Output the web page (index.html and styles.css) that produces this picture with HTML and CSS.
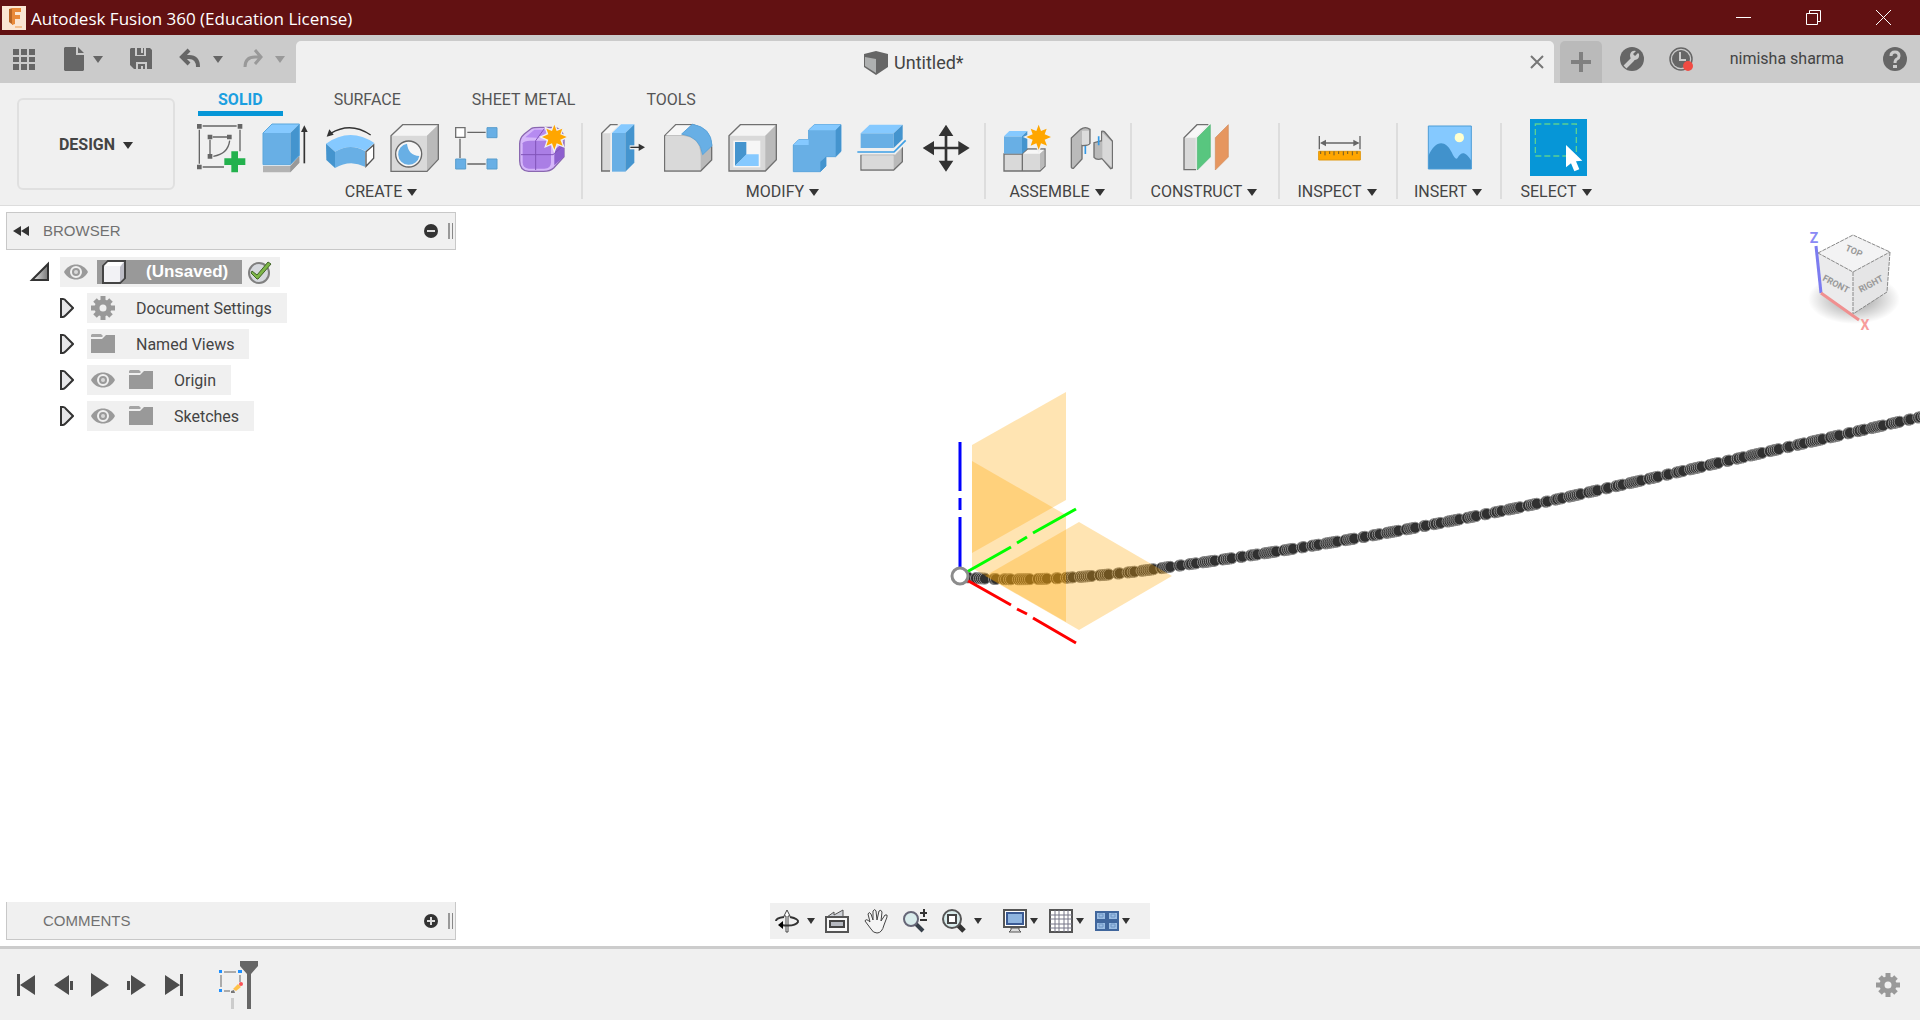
FILE: index.html
```html
<!DOCTYPE html>
<html lang="en">
<head>
    <meta charset="UTF-8">
    <meta name="viewport" content="width=device-width, initial-scale=1.0">
    <title>Autodesk Fusion 360 (Education License)</title>
    <link rel="stylesheet" href="styles.css">
</head>
<body>
    <!-- shared icons -->
    <svg class="defs" aria-hidden="true">
        <symbol id="eye" viewBox="0 0 24 24">
            <path d="M0 12C5 2 19 2 24 12C19 22 5 22 0 12Z" fill="#9a9a9a"/>
            <circle cx="12" cy="12" r="5" fill="#9a9a9a" stroke="#f0f0f0" stroke-width="2"/>
            <circle cx="12" cy="12" r="2" fill="#d8d8d8"/>
        </symbol>
        <symbol id="folder" viewBox="0 0 24 24">
            <path d="M0 4V3L1 2H10L12 4L11 5H0Z" fill="#a5a5a5"/>
            <path d="M0 7H11L15 3H24V21H0Z" fill="#999"/>
        </symbol>
        <symbol id="gear" viewBox="0 0 24 24">
            <g stroke="#999" stroke-width="5">
                <path d="M12 0V24M0 12H24M4 4L20 20M20 4L4 20"/>
            </g>
            <circle cx="12" cy="12" r="6" fill="#f0f0f0" stroke="#999" stroke-width="5"/>
        </symbol>
        <symbol id="closed" viewBox="0 0 14 20">
            <path d="M1 1H3Q5 1 6 3L13 10L6 17Q4 19 3 19H1Z" fill="#e6e6e8" stroke="#333" stroke-width="2"/>
        </symbol>
    </svg>

    <header class="titlebar">
        <svg class="logo" viewBox="0 0 24 24">
            <rect width="24" height="24" fill="#fbe6d3"/>
            <path d="M7 3L11 2V19L7 16Z" fill="#b96524"/>
            <path d="M10 2H19V6H13V9H18V13H13V18L10 19Z" fill="#e98a3a"/>
            <path d="M13 20H20V22H13Z" fill="#f5c08f"/>
        </svg>
        <h1>Autodesk Fusion 360 (Education License)</h1>
        <div class="window-buttons">
            <button aria-label="Minimize"><svg viewBox="0 0 15 15"><path d="M0 7.500H15"/></svg></button>
            <button aria-label="Restore"><svg viewBox="0 0 15 15"><path d="M.5 3.500H11.500V14.500H.5ZM3.500 3V.5H14.500V11.500H12"/></svg></button>
            <button aria-label="Close"><svg viewBox="0 0 15 15"><path d="M0 0L15 15M15 0L0 15"/></svg></button>
        </div>
    </header>

    <div class="topbar">
        <div class="quick">
            <button aria-label="Data panel">
                <svg viewBox="0 0 24 24"><path d="M1 2H7V8H1ZM9 2H15V8H9ZM17 2H23V8H17ZM1 10H7V15H1ZM9 10H15V15H9ZM17 10H23V15H17ZM1 17H7V23H1ZM9 17H15V23H9ZM17 17H23V23H17Z"/></svg>
            </button>
            <button aria-label="File">
                <svg viewBox="0 0 24 24"><path d="M3 0H14V8H22V23L21 24H3L2 23V1ZM16 0L22 6H16Z"/></svg>
                <span class="caret"></span>
            </button>
            <button aria-label="Save">
                <svg viewBox="0 0 24 24"><path d="M2 1H6V9H17V1H21L23 3V22H18V15H7V22L5 22L1 18V2ZM8 1H12V6H14V1H15V8H8ZM9 17H16V22H14V19H12V22H9Z"/></svg>
            </button>
            <div class="history">
                <button aria-label="Undo">
                    <svg viewBox="0 0 24 24"><path d="M10 3L3 10L10 17M3 10H10Q19 10 19 20" fill="none" stroke="#666" stroke-width="4"/></svg>
                    <span class="caret"></span>
                </button>
                <button class="dim" aria-label="Redo">
                    <svg viewBox="0 0 24 24"><path d="M14 3L20 10L14 17M20 10H14Q4 10 4 20" fill="none" stroke="#999" stroke-width="3"/></svg>
                    <span class="caret"></span>
                </button>
            </div>
        </div>
        <div class="doc-tab">
            <div class="doc-title">
                <svg viewBox="0 0 24 24"><path d="M0 3L12 0L24 3V16L12 24L0 16Z" fill="#666"/><path d="M1 6L12 8V22L1 15Z" fill="#aeb0b0"/></svg>
                <span>Untitled*</span>
            </div>
            <button aria-label="Close tab"><svg viewBox="0 0 14 14"><path d="M1 1L13 13M13 1L1 13" stroke="#777" stroke-width="2"/></svg></button>
        </div>
        <button class="new-tab" aria-label="New tab"><svg viewBox="0 0 20 20"><path d="M10 0V20M0 10H20" stroke="#808080" stroke-width="4"/></svg></button>
        <div class="account">
            <button aria-label="Extensions">
                <svg viewBox="0 0 24 24"><circle cx="12" cy="12" r="12" fill="#666"/><path d="M5 20L13 12" stroke="#ccc" stroke-width="4"/><path d="M18 6L15 9L13 7L16 4Q11 3 10 8Q10 14 15 13Q20 12 19 7Z" fill="#ccc"/></svg>
            </button>
            <button aria-label="Job status">
                <svg viewBox="0 0 24 24"><circle cx="12" cy="12" r="11" fill="none" stroke="#666" stroke-width="1.500"/><circle cx="12" cy="12" r="9" fill="#666"/><path d="M11 5V13H17" fill="none" stroke="#ccc" stroke-width="2"/><circle cx="19" cy="19" r="5" fill="#f04b43"/></svg>
            </button>
            <button class="user">nimisha sharma</button>
            <button aria-label="Help">
                <svg viewBox="0 0 24 24"><circle cx="12" cy="12" r="12" fill="#666"/><path d="M8 9Q8 5 12 5Q16 5 16 9Q16 11 14 12Q12 13 12 16" fill="none" stroke="#ccc" stroke-width="3"/><path d="M10 18H14V21H10Z" fill="#ccc"/></svg>
            </button>
        </div>
    </div>

    <section class="ribbon">
        <button class="workspace">DESIGN <span class="caret"></span></button>
        <div class="tools">
            <nav class="tabs">
                <a href="#" class="active">SOLID</a>
                <a href="#">SURFACE</a>
                <a href="#">SHEET METAL</a>
                <a href="#">TOOLS</a>
            </nav>
            <div class="groups">
                <div class="group create">
                    <div class="icons">
                        <button aria-label="Create Sketch">
                            <svg viewBox="49 130 144 144">
                                <g fill="none" stroke="#666" stroke-width="4"><path d="M66 136H168M56 147V249M178 147V212M66 259H130M96 169H140M88 177V220M98 227Q142 220 147 180"/></g>
                                <path d="M49 130H63V144H49ZM171 130H185V144H171ZM49 252H63V266H49ZM81 162H95V176H81ZM139 162H153V176H139ZM81 220H95V234H81Z" fill="#666"/>
                                <path d="M152 212H172V233H194V253H172V275H152V253H131V233H152Z" fill="#23b14d"/>
                            </svg>
                        </button>
                        <button aria-label="Extrude">
                            <svg viewBox="244 130 144 144">
                                <path d="M247 256H329L356 226V246L329 275H247Z" fill="#b3b3b3"/><path d="M329 256L356 226V246L329 275Z" fill="#999"/>
                                <path d="M247 157H329V252H247Z" fill="#68afe5"/><path d="M247 157L274 130H356L329 157Z" fill="#85c9ff"/><path d="M329 157L356 130V224L329 252Z" fill="#4494ce"/>
                                <path d="M247 157L274 130H356V224L329 252H247Z" fill="none" stroke="#5ba7dc" stroke-width="3"/>
                                <path d="M371 248V146" stroke="#333" stroke-width="5"/><path d="M361 154L371 134L381 154Z" fill="#333"/>
                            </svg>
                        </button>
                        <button aria-label="Revolve">
                            <svg viewBox="439 130 144 144">
                                <path d="M436 189Q508 138 581 187L555 211Q508 186 463 213Z" fill="#85c9ff"/>
                                <path d="M436 189L463 213V262L437 238Z" fill="#4494ce"/>
                                <path d="M463 213Q508 186 553 211V258Q508 235 463 262Z" fill="#68afe5"/>
                                <path d="M556 213L579 193V233L556 257Z" fill="#fff" stroke="#555" stroke-width="4"/>
                                <path d="M450 158Q510 122 570 163" fill="none" stroke="#333" stroke-width="4"/><path d="M438 168L446 146L459 162Z" fill="#333"/>
                            </svg>
                        </button>
                        <button aria-label="Hole">
                            <svg viewBox="634 130 144 144">
                                <path d="M631 165L666 132H773V236L739 272H631Z" fill="#d9d9d9"/><path d="M631 165L666 132H773L739 165Z" fill="#f4f4f4"/><path d="M739 165L773 132V236L739 272Z" fill="#bababa"/>
                                <path d="M631 165L666 132H773V236L739 272H631Z" fill="none" stroke="#707070" stroke-width="4"/>
                                <circle cx="684" cy="220" r="39" fill="#f6f6f6" stroke="#666" stroke-width="4"/>
                                <path d="M679 189A32 32 0 1 0 716 226Q683 224 679 189Z" fill="#68afe5"/>
                            </svg>
                        </button>
                        <button aria-label="Rectangular Pattern">
                            <svg viewBox="829 130 144 144">
                                <path d="M860 155H915M838 174V232M860 250H915" stroke="#666" stroke-width="4"/>
                                <path d="M825 141H853V170H825Z" fill="#fff" stroke="#707070" stroke-width="4"/>
                                <path d="M919 141H949V171H919ZM825 235H855V265H825ZM919 235H949V265H919Z" fill="#68afe5" stroke="#589dcc" stroke-width="3"/>
                            </svg>
                        </button>
                        <button aria-label="Create Form">
                            <svg viewBox="1025 130 144 144">
                                <path d="M1018 190Q1018 172 1032 160L1054 143Q1060 140 1080 140H1126Q1150 150 1151 175V228L1120 262Q1110 272 1090 272H1045Q1018 270 1018 240Z" fill="#d5b6fa" stroke="#8a68b0" stroke-width="4"/>
                                <path d="M1027 188Q1030 180 1050 180H1095Q1112 182 1112 200V245Q1112 264 1092 264H1045Q1027 262 1027 245Z" fill="#aa7ee5"/>
                                <path d="M1035 170L1062 147H1105L1085 172Z" fill="#b68bf1"/>
                                <path d="M1122 208L1151 184V228L1122 254Z" fill="#8d5fce"/>
                                <path d="M1022 222H1118L1150 194M1066 268V180L1092 144" fill="none" stroke="#8153b8" stroke-width="3"/>
                                <path d="M1122 132L1129 151L1146 144L1140 161L1159 169L1140 177L1147 195L1129 188L1122 207L1115 188L1098 195L1104 177L1085 169L1104 161L1098 144L1115 151Z" fill="none" stroke="#f0f0f0" stroke-width="8"/>
                                <path d="M1122 132L1129 151L1146 144L1140 161L1159 169L1140 177L1147 195L1129 188L1122 207L1115 188L1098 195L1104 177L1085 169L1104 161L1098 144L1115 151Z" fill="#ffa600"/>
                            </svg>
                        </button>
                    </div>
                    <button class="group-label">CREATE <span class="caret"></span></button>
                </div>

                <div class="group modify">
                    <div class="icons">
                        <button aria-label="Press Pull">
                            <svg viewBox="55 130 144 144">
                                <path d="M66 158L92 132H118L92 158V271H66Z" fill="#d9d9d9"/><path d="M66 158L92 132H118L92 158Z" fill="#f7f7f7"/><path d="M114 132H92L66 158V271H91" fill="none" stroke="#707070" stroke-width="4"/>
                                <path d="M97 157H137V273H97Z" fill="#68afe5"/><path d="M97 157L124 131H164L137 157Z" fill="#85c9ff"/><path d="M137 157L164 131V246L137 273Z" fill="#4494ce"/>
                                <path d="M150 200H180" stroke="#f0f0f0" stroke-width="12"/><path d="M152 200H182" stroke="#333" stroke-width="4"/><path d="M177 189L196 200L177 211Z" fill="#333"/>
                            </svg>
                        </button>
                        <button aria-label="Fillet">
                            <svg viewBox="250 130 144 144">
                                <path d="M255 165L288 132H340Q395 150 396 200V238L363 271H255Z" fill="#bababa" stroke="#707070" stroke-width="4"/>
                                <path d="M257 165H305Q362 166 363 225V269H257Z" fill="#d9d9d9"/><path d="M259 163L289 134H335L305 163Z" fill="#f7f7f7"/>
                                <path d="M306 160L338 131Q395 140 397 195L369 222Q362 168 306 160Z" fill="#68afe5" stroke="#5aa5dd" stroke-width="3"/>
                            </svg>
                        </button>
                        <button aria-label="Shell">
                            <svg viewBox="445 130 144 144">
                                <path d="M448 165L482 132H590V237L557 271H448Z" fill="#d9d9d9"/><path d="M448 165L482 132H590L557 165Z" fill="#f4f4f4"/><path d="M557 165L590 132V237L557 271Z" fill="#bababa"/>
                                <path d="M448 165L482 132H590V237L557 271H448Z" fill="none" stroke="#707070" stroke-width="4"/>
                                <path d="M461 180H542V260H461Z" fill="#f6f6f6"/><path d="M466 184H500V222L466 256Z" fill="#4494ce"/><path d="M500 221H537V256H466Z" fill="#85c9ff"/>
                            </svg>
                        </button>
                        <button aria-label="Combine">
                            <svg viewBox="640 130 144 144">
                                <path d="M641 193L657 177H687V148L704 132H784V212L768 228H739V256L722 273H641Z" fill="#68afe5" stroke="#5aa5dd" stroke-width="3"/>
                                <path d="M687 149L704 132H784L768 149Z" fill="#85c9ff"/><path d="M641 193L657 177H687V193Z" fill="#85c9ff"/><path d="M768 149L784 132V212L768 228ZM722 243L739 228V256L722 273Z" fill="#4494ce"/>
                            </svg>
                        </button>
                        <button aria-label="Split Body">
                            <svg viewBox="835 130 144 144">
                                <path d="M844 222H942L968 196V243L942 268H844Z" fill="#bababa" stroke="#707070" stroke-width="4"/><path d="M846 224H942V266H846Z" fill="#d9d9d9"/>
                                <path d="M833 214H943L978 179" fill="none" stroke="#f0f0f0" stroke-width="16"/>
                                <path d="M843 158H942V202H843Z" fill="#68afe5"/><path d="M843 158L870 132H969L942 158Z" fill="#85c9ff"/><path d="M942 158L969 132V176L942 202Z" fill="#4494ce"/>
                                <path d="M833 214H943L978 179" fill="none" stroke="#3d9fe5" stroke-width="5"/>
                            </svg>
                        </button>
                        <button aria-label="Move/Copy">
                            <svg viewBox="1030 130 144 144">
                                <path d="M1099 155V250M1050 202H1150" stroke="#333" stroke-width="8"/>
                                <path d="M1099 132L1121 166H1077ZM1099 273L1077 240H1121ZM1029 202L1063 181V224ZM1170 202L1136 181V224Z" fill="#333"/>
                            </svg>
                        </button>
                    </div>
                    <button class="group-label">MODIFY <span class="caret"></span></button>
                </div>

                <div class="group assemble">
                    <div class="icons">
                        <button aria-label="New Component">
                            <svg viewBox="69 130 144 144">
                                <path d="M72 220H127L142 205H195V257L180 271H72Z" fill="#d9d9d9" stroke="#707070" stroke-width="4"/><path d="M129 219L144 207H193L180 219Z" fill="#f7f7f7"/><path d="M180 219L193 207V256L180 269Z" fill="#bababa"/><path d="M127 220V271" stroke="#707070" stroke-width="4"/>
                                <path d="M72 167H126V219H72Z" fill="#68afe5"/><path d="M72 167L88 151H142L126 167Z" fill="#85c9ff"/><path d="M126 167L142 151V204L126 219Z" fill="#4494ce"/>
                                <path d="M176 132L183 151L200 144L194 161L213 169L194 177L201 195L183 188L176 207L169 188L152 195L158 177L139 169L158 161L152 144L169 151Z" fill="none" stroke="#f0f0f0" stroke-width="8"/>
                                <path d="M176 132L183 151L200 144L194 161L213 169L194 177L201 195L183 188L176 207L169 188L152 195L158 177L139 169L158 161L152 144L169 151Z" fill="#ffa600"/>
                            </svg>
                        </button>
                        <button aria-label="Joint">
                            <svg viewBox="264 130 144 144">
                                <path d="M274 172L302 146Q316 136 330 146V188Q324 196 306 194V235L280 263Q274 264 274 258Z" fill="#bababa" stroke="#707070" stroke-width="4"/>
                                <path d="M306 150H327V190L306 193Z" fill="#dcdcdc"/>
                                <path d="M365 152Q370 150 374 154L397 181V262L392 264L366 234Q350 240 342 230V186L365 180Z" fill="#bababa" stroke="#707070" stroke-width="4"/>
                                <path d="M367 156L395 183V260L367 232Z" fill="#d9d9d9"/>
                                <path d="M316 196V220M356 167V194" stroke="#3399e6" stroke-width="5"/>
                            </svg>
                        </button>
                    </div>
                    <button class="group-label">ASSEMBLE <span class="caret"></span></button>
                </div>

                <div class="group construct">
                    <div class="icons">
                        <button aria-label="Offset Plane">
                            <svg viewBox="606 130 144 144">
                                <path d="M612 171L651 132H685L647 171V267H612Z" fill="#d9d9d9"/><path d="M612 171L651 132H685L647 171Z" fill="#f7f7f7"/><path d="M685 132H651L612 171V267H648" fill="none" stroke="#707070" stroke-width="4"/>
                                <path d="M652 171L691 132V229L652 268Z" fill="#58c67f" stroke="#4fb573" stroke-width="2"/>
                                <path d="M706 171L745 132V229L706 268Z" fill="#e6965f" stroke="#d08b5c" stroke-width="2"/>
                            </svg>
                        </button>
                    </div>
                    <button class="group-label">CONSTRUCT <span class="caret"></span></button>
                </div>

                <div class="group inspect">
                    <div class="icons">
                        <button aria-label="Measure">
                            <svg viewBox="1005 130 144 144">
                                <path d="M1018 166V206M1140 166V206M1025 187H1135" stroke="#666" stroke-width="4"/><path d="M1020 187L1038 177V197ZM1138 187L1120 177V197Z" fill="#666"/>
                                <path d="M1016 212H1141V238H1016Z" fill="#ffa600" stroke="#df970e" stroke-width="3"/>
                                <path d="M1022 212V220M1035 212V224M1049 212V220M1062 212V224M1076 212V220M1090 212V224M1103 212V220M1117 212V224M1131 212V220" stroke="#6b5a2c" stroke-width="3"/>
                            </svg>
                        </button>
                    </div>
                    <button class="group-label">INSPECT <span class="caret"></span></button>
                </div>

                <div class="group insert">
                    <div class="icons">
                        <button aria-label="Insert Image">
                            <svg viewBox="258 130 144 144">
                                <path d="M265 136H394V265H265Z" fill="#85c9ff"/>
                                <path d="M265 226C285 180 315 175 335 215Q345 238 352 233C365 212 375 212 394 240V265H265Z" fill="#4192cc"/>
                                <path d="M265 136H394V265H265Z" fill="none" stroke="#4d9dd6" stroke-width="3"/>
                                <circle cx="358" cy="171" r="14" fill="#ffffce"/>
                            </svg>
                        </button>
                    </div>
                    <button class="group-label">INSERT <span class="caret"></span></button>
                </div>

                <div class="group select">
                    <div class="icons">
                        <button class="selected" aria-label="Select">
                            <svg viewBox="570 117 171 171">
                                <path d="M586 132H709V228H586Z" fill="none" stroke="#5bd093" stroke-width="4" stroke-dasharray="18 9"/>
                                <path d="M678 195L727 242L708 244L718 268L703 274L693 250L678 262Z" fill="#fff"/>
                            </svg>
                        </button>
                    </div>
                    <button class="group-label">SELECT <span class="caret"></span></button>
                </div>
            </div>
        </div>
    </section>

    <main class="viewport">
        <svg class="scene" viewBox="0 206 1920 740" preserveAspectRatio="xMidYMid slice">
            <g id="sketch-points" fill="#303030" stroke="#8c8c8c" stroke-width="1"></g>
            <g fill="#ffa500" fill-opacity=".3">
                <path d="M972 445L1066 392V500L972 553Z"/>
                <path d="M972 461L1066 515V622L972 568Z"/>
                <path d="M985 576L1079 522L1172 576L1079 630Z"/>
            </g>
            <g fill="none" stroke-width="3">
                <path d="M960 442V491M960 498V510M960 517V570" stroke="#0000ff"/>
                <path d="M965 573L1011 547M1017 543L1027 537M1033 533L1076 509" stroke="#00ff00"/>
                <path d="M965 579L1011 605M1017 609L1027 614M1033 618L1076 643" stroke="#ff0000"/>
            </g>
            <circle cx="960" cy="576" r="8" fill="#fff" stroke="#8c8c8c" stroke-width="3"/>
        </svg>

        <svg class="viewcube" viewBox="0 0 140 140">
            <defs>
                <radialGradient id="shade"><stop offset=".4" stop-color="#000" stop-opacity=".25"/><stop offset="1" stop-color="#000" stop-opacity="0"/></radialGradient>
            </defs>
            <ellipse cx="74" cy="89" rx="46" ry="25" fill="url(#shade)"/>
            <path d="M73 25L110 42L73 62L38 43Z" fill="#f3f3f4"/>
            <path d="M38 43L73 62V104L41 83Z" fill="#ebebec"/>
            <path d="M73 62L110 42L107 82L73 104Z" fill="#e5e5e6"/>
            <path d="M38 43L73 25L110 42L107 82L73 104M38 43L73 62L110 42M73 62V104" fill="none" stroke="#888" stroke-dasharray="4 1"/>
            <path d="M36 36L41 83" stroke="#7c7cf0" stroke-width="3"/>
            <path d="M41 83L79 110" stroke="#f09090" stroke-width="3"/>
            <g class="cube-faces">
                <text x="74" y="44" transform="rotate(24 74 41)">TOP</text>
                <text x="56" y="77" transform="rotate(28 56 74)">FRONT</text>
                <text x="91" y="77" transform="rotate(-28 91 74)">RIGHT</text>
            </g>
            <text class="axis-z" x="34" y="33">Z</text>
            <text class="axis-x" x="85" y="120">X</text>
        </svg>

        <aside class="browser">
            <div class="panel-head">
                <svg class="collapse" viewBox="0 0 16 10"><path d="M8 0V10L0 5ZM16 0V10L8 5Z"/></svg>
                <h2>BROWSER</h2>
                <button aria-label="Collapse browser"><svg viewBox="0 0 14 14"><circle cx="7" cy="7" r="7" fill="#333"/><path d="M3 7H11" stroke="#ddd" stroke-width="2"/></svg></button>
                <span class="grip"></span>
            </div>
            <ul class="tree">
                <li class="root">
                    <svg class="arrow" viewBox="0 0 18 18">
                        <defs><linearGradient id="fold"><stop stop-color="#eee"/><stop offset="1" stop-color="#777"/></linearGradient></defs>
                        <path d="M1 17L17 1V17Z" fill="url(#fold)" stroke="#333" stroke-width="2"/>
                    </svg>
                    <div class="node">
                        <svg class="icon"><use href="#eye"/></svg>
                        <span class="current">
                            <svg class="icon" viewBox="0 0 24 24"><path d="M1 6L6 1H23V18L18 23H1Z" fill="#f2f2f5" stroke="#444" stroke-width="2"/><path d="M18 7L22 2V18L18 22Z" fill="#bdbdc6"/><path d="M2 6L6 2H21L18 6Z" fill="#fff"/></svg>
                            <b>(Unsaved)</b>
                        </span>
                        <svg class="icon" viewBox="0 0 24 24"><circle cx="12" cy="13" r="10" fill="#d6d9de" stroke="#808080" stroke-width="2"/><path d="M5 11L10 15L21 2L24 4L11 19L10 19L4 13Z" fill="#7db648" stroke="#416428"/></svg>
                    </div>
                </li>
                <li><svg class="arrow"><use href="#closed"/></svg><div class="node"><svg class="icon"><use href="#gear"/></svg><span>Document Settings</span></div></li>
                <li><svg class="arrow"><use href="#closed"/></svg><div class="node"><svg class="icon"><use href="#folder"/></svg><span>Named Views</span></div></li>
                <li><svg class="arrow"><use href="#closed"/></svg><div class="node"><svg class="icon"><use href="#eye"/></svg><svg class="icon"><use href="#folder"/></svg><span>Origin</span></div></li>
                <li><svg class="arrow"><use href="#closed"/></svg><div class="node"><svg class="icon"><use href="#eye"/></svg><svg class="icon"><use href="#folder"/></svg><span>Sketches</span></div></li>
            </ul>
        </aside>

        <div class="bottom-row">
            <div class="panel-head comments">
                <h2>COMMENTS</h2>
                <button aria-label="Expand comments"><svg viewBox="0 0 14 14"><circle cx="7" cy="7" r="7" fill="#333"/><path d="M3 7H11M7 3V11" stroke="#ddd" stroke-width="2"/></svg></button>
                <span class="grip"></span>
            </div>
            <div class="navbar">
                <button class="spaced" aria-label="Orbit">
                    <svg viewBox="0 0 24 24"><path d="M11 23V7H9L12 1L15 7H13V23Z" fill="#fff" stroke="#444"/><path d="M15 8Q24 10 23 13Q20 18 6 16M9 8Q1 9 1 12" fill="none" stroke="#333" stroke-width="2"/><path d="M3 16L8 12V20Z"/></svg>
                    <span class="caret"></span>
                </button>
                <button aria-label="Look At">
                    <svg viewBox="0 0 24 24"><path d="M2 8L9 3V6L18 1V8" fill="#cfd2d8" stroke="#555"/><path d="M1 8H23V23H1Z" fill="#f8f8f8" stroke="#555" stroke-width="2"/><path d="M5 12H19V18H5Z" fill="#b5b8bf" stroke="#444" stroke-width="2"/></svg>
                </button>
                <button aria-label="Pan">
                    <svg viewBox="0 0 24 24"><path d="M7 20L1 12Q2 9 6 13L4 5Q5 2 7 5L9 11L9 2Q11 -1 12 2L13 11L15 2Q17 0 18 3L17 12L21 6Q24 5 23 8L20 16Q18 24 13 24Q9 24 7 20Z" fill="#f5f5f5" stroke="#444"/></svg>
                </button>
                <button aria-label="Zoom">
                    <svg viewBox="0 0 24 24"><path d="M13 15L20 22" stroke="#37404a" stroke-width="4"/><circle cx="8" cy="10" r="7" fill="#d9ecec" stroke="#667" stroke-width="2"/><path d="M17 4H24M21 0V8M17 11H24" stroke="#333" stroke-width="2"/></svg>
                </button>
                <button class="spaced" aria-label="Fit">
                    <svg viewBox="0 0 24 24"><path d="M16 16L22 22" stroke="#333" stroke-width="5"/><circle cx="10" cy="10" r="9" fill="#d9ecec" stroke="#555" stroke-width="2"/><path d="M6 6H14V14H6Z" fill="#fff" stroke="#444" stroke-width="2"/></svg>
                    <span class="caret"></span>
                </button>
                <div class="display">
                    <button aria-label="Display Settings">
                        <svg viewBox="0 0 24 24"><path d="M1 1H23V18H1Z" fill="#fff" stroke="#555" stroke-width="2"/><path d="M4 4H20V15H4Z" fill="#8fb5e0" stroke="#3a5a94" stroke-width="2"/><path d="M8 19H16V21L18 23H6L8 21Z" fill="#ddd" stroke="#555"/></svg>
                        <span class="caret"></span>
                    </button>
                    <button aria-label="Grid and Snaps">
                        <svg viewBox="0 0 24 24"><path d="M1 1H23V23H1Z" fill="#fff" stroke="#555" stroke-width="2"/><path d="M6 1V23M10 1V23M15 1V23M19 1V23M1 6H23M1 10H23M1 15H23M1 19H23" stroke="#778"/></svg>
                        <span class="caret"></span>
                    </button>
                    <button aria-label="Viewports">
                        <svg viewBox="0 0 24 24"><path d="M1 3H11V11H1ZM13 3H23V11H13ZM1 13H11V21H1ZM13 13H23V21H13Z" fill="#9bbde3" stroke="#40669c" stroke-width="2"/><path d="M4 5H8V8H4ZM16 5H20V8H16ZM4 15H8V18H4ZM16 15H20V18H16Z" fill="none" stroke="#6f96c6"/></svg>
                        <span class="caret"></span>
                    </button>
                </div>
            </div>
        </div>
    </main>

    <footer class="timeline">
        <div class="playback">
            <button aria-label="Go to start"><svg viewBox="0 0 20 24"><path d="M1 1H4V23H1ZM19 2V22L4 12Z"/></svg></button>
            <button aria-label="Step back"><svg viewBox="0 0 20 24"><path d="M16 2V22L1 12ZM17 8H20V17H17Z"/></svg></button>
            <button aria-label="Play"><svg viewBox="0 0 20 24"><path d="M1 0L19 12L1 24Z"/></svg></button>
            <button aria-label="Step forward"><svg viewBox="0 0 20 24"><path d="M4 2V22L19 12ZM0 8H3V17H0Z"/></svg></button>
            <button aria-label="Go to end"><svg viewBox="0 0 20 24"><path d="M16 1H19V23H16ZM1 2V22L16 12Z"/></svg></button>
        </div>
        <button class="feature" aria-label="Sketch1">
            <svg viewBox="0 0 44 50">
                <path d="M8 12H20M5 15V27M24 15V22M8 31H14" stroke="#666"/>
                <path d="M3 10H6V13H3ZM22 10H26V13H22ZM3 29H6V32H3Z" fill="#1e90ff"/>
                <path d="M17 29L22 24L25 27L20 31Z" fill="#ffc14a"/><circle cx="25" cy="24" r="2" fill="#fa5055"/><path d="M15 31L18 30L19 33H15Z" fill="#777"/>
                <path d="M15 38H18V49H15Z" fill="#ccc"/>
                <path d="M24 1H42V6L35 14V49H31V14L24 6Z" fill="#666"/>
            </svg>
        </button>
        <button class="settings" aria-label="Timeline settings"><svg><use href="#gear"/></svg></button>
    </footer>

    <script>
        // fitted points along the imported curve
        var SVG = 'http://www.w3.org/2000/svg';
        var curve = document.createElementNS(SVG, 'path');
        curve.setAttribute('d', 'M964 577C1010 582 1090 579 1169 567C1290 551 1410 530 1531 505C1660 477 1790 446 1930 415');
        var group = document.getElementById('sketch-points');
        var steps = [2, 2, 8, 3, 2, 2, 2, 9, 2, 8, 2, 3, 2, 7, 2, 2, 2, 2];
        var length = curve.getTotalLength();

        for (var at = 0, i = 0; at < length; at += steps[i % steps.length], i++) {
            var p = curve.getPointAtLength(at);
            var dot = document.createElementNS(SVG, 'circle');
            dot.setAttribute('cx', p.x);
            dot.setAttribute('cy', p.y);
            dot.setAttribute('r', 5.5);
            group.appendChild(dot);
        }
    </script>
</body>
</html>
```
FILE: styles.css
```css
* {
    box-sizing: border-box;
}

body {
    margin: 0;
    height: 100vh;
    display: flex;
    flex-direction: column;
    overflow: hidden;
    background: #fff;
    color: #444;
    font-family: Roboto, "Liberation Sans", sans-serif;
    font-size: 16px;
    line-height: 20px;
}

button {
    display: flex;
    align-items: center;
    justify-content: center;
    padding: 0;
    border: none;
    background: none;
    color: inherit;
    font: inherit;
    cursor: pointer;
}

svg {
    display: block;
    flex: none;
    overflow: visible;
}

.defs {
    position: absolute;
    width: 0;
    height: 0;
}

.caret {
    border-left: 5px solid transparent;
    border-right: 5px solid transparent;
    border-top: 7px solid #333;
}

/* title bar */
.titlebar {
    display: flex;
    align-items: center;
    height: 35px;
    padding: 0 2px;
    background: #621112;
    color: #fff;
}

.logo {
    width: 24px;
    height: 24px;
}

.titlebar h1 {
    flex: 1;
    margin: 0 0 0 5px;
    padding-top: 2px;
    font-family: "Open Sans", "Noto Sans", sans-serif;
    font-size: 17px;
    font-weight: normal;
}

.window-buttons {
    display: flex;
}

.window-buttons button {
    width: 70px;
    height: 33px;
}

.window-buttons svg {
    width: 15px;
    height: 15px;
    fill: none;
    stroke: #fff;
}

/* quick access + document tabs */
.topbar {
    display: flex;
    align-items: flex-end;
    height: 48px;
    background: #cbcbcb;
}

.quick {
    display: flex;
    align-items: center;
    gap: 26px;
    width: 296px;
    height: 48px;
    padding-left: 12px;
}

.quick button {
    gap: 7px;
}

.quick svg,
.doc-title svg,
.account svg {
    width: 24px;
    height: 24px;
    fill: #666;
}

.quick .caret {
    border-top-color: #666;
}

.quick .dim .caret {
    border-top-color: #999;
}

.history {
    display: flex;
    gap: 18px;
}

.history button {
    gap: 10px;
}

.doc-tab {
    flex: 1;
    display: flex;
    align-items: center;
    height: 42px;
    padding-right: 10px;
    background: #f0f0f0;
    border-radius: 5px 5px 0 0;
}

.doc-tab button svg {
    width: 14px;
    height: 14px;
}

.doc-title {
    flex: 1;
    display: flex;
    align-items: center;
    justify-content: center;
    gap: 6px;
    padding: 2px 0 0 2px;
    font-size: 18px;
}

.new-tab {
    width: 42px;
    height: 42px;
    margin-left: 6px;
    background: #bababa;
    border-radius: 5px 5px 0 0;
}

.new-tab svg {
    width: 20px;
    height: 20px;
}

.account {
    display: flex;
    align-items: center;
    gap: 25px;
    height: 48px;
    padding: 0 13px 0 18px;
}

.account .user {
    margin: 0 14px 0 12px;
}

/* ribbon */
.ribbon {
    display: flex;
    height: 123px;
    padding-left: 17px;
    background: #f0f0f0;
    border-bottom: 1px solid #ddd;
}

.workspace {
    gap: 8px;
    width: 158px;
    height: 92px;
    margin: 15px 12px 0 0;
    padding-top: 2px;
    border: 2px solid #e0e0e0;
    border-radius: 6px;
    font-weight: bold;
}

.tabs {
    display: flex;
    gap: 31px;
    margin-left: 11px;
}

.tabs a {
    height: 33px;
    padding: 7px 20px 0;
    color: #555;
    text-decoration: none;
}

.tabs .active {
    color: #1c9fe0;
    font-weight: bold;
    border-bottom: 5px solid #0696d7;
}

.groups {
    display: flex;
    margin-top: 3px;
}

.group {
    display: flex;
    flex-direction: column;
    align-items: center;
    gap: 6px;
    height: 83px;
    background: linear-gradient(#ddd, #ddd) right 0 top 4px / 2px 76px no-repeat;
}

.icons {
    display: flex;
}

.icons button {
    width: 65px;
    height: 57px;
}

.icons svg {
    width: 48px;
    height: 48px;
}

.icons .selected {
    width: 57px;
    background: #0696d7;
}

.icons .selected svg {
    width: 57px;
    height: 57px;
}

.group-label {
    gap: 5px;
    padding-right: 4px;
}

.create {
    width: 396px;
    padding-right: 4px;
}

.modify { width: 403px; }
.assemble { width: 146px; }
.construct { width: 148px; }
.inspect { width: 118px; }
.insert { width: 104px; }
.select {
    width: 112px;
    background: none;
}

/* viewport */
.viewport {
    position: relative;
    flex: 1;
    display: flex;
    flex-direction: column;
    justify-content: space-between;
    min-height: 0;
    padding: 6px;
}

.scene {
    position: absolute;
    top: 0;
    left: 0;
    width: 100%;
    height: 100%;
    overflow: hidden;
}

.viewcube {
    position: absolute;
    top: 4px;
    right: 0;
    width: 140px;
    height: 140px;
}

.cube-faces {
    fill: #999;
    font-size: 9px;
    font-weight: bold;
    text-anchor: middle;
}

.axis-z,
.axis-x {
    fill: #8a8af5;
    font-size: 14px;
    font-weight: bold;
    text-anchor: middle;
}

.axis-x {
    fill: #f79c9c;
}

.browser,
.bottom-row {
    position: relative;
}

.panel-head {
    display: flex;
    align-items: center;
    width: 450px;
    height: 38px;
    padding: 0 2px 0 6px;
    background: #f0f0f0;
    border: 1px solid #c8c8c8;
}

.collapse {
    width: 16px;
    height: 10px;
    margin-right: 14px;
    fill: #333;
}

.panel-head h2 {
    flex: 1;
    margin: 0;
    color: #707070;
    font-family: "Liberation Sans", Arial, sans-serif;
    font-size: 15px;
    font-weight: normal;
}

.panel-head button svg {
    width: 14px;
    height: 14px;
}

.grip {
    width: 5px;
    height: 16px;
    margin-left: 10px;
    border-left: 2px solid #999;
    border-right: 1px solid #888;
}

.tree {
    display: flex;
    flex-direction: column;
    gap: 6px;
    margin: 7px 0 0;
    padding: 0;
    list-style: none;
}

.tree li {
    display: flex;
    align-items: center;
    gap: 13px;
    padding-left: 54px;
}

.tree .root {
    gap: 11px;
    padding-left: 25px;
}

.arrow {
    width: 14px;
    height: 20px;
}

.root .arrow {
    width: 18px;
    height: 18px;
}

.node {
    display: flex;
    align-items: center;
    gap: 14px;
    height: 30px;
    padding: 0 15px 0 4px;
    background: #f0f0f0;
}

.node span {
    margin-left: 7px;
    padding-top: 1px;
}

.root .node {
    gap: 5px;
    padding-right: 9px;
}

.icon {
    width: 24px;
    height: 24px;
}

.node .current {
    display: flex;
    align-items: center;
    gap: 20px;
    height: 24px;
    margin-left: 4px;
    padding: 0 14px 0 5px;
    background: #999;
    color: #fff;
    font-family: "Liberation Sans", Arial, sans-serif;
    font-size: 17px;
}

.bottom-row {
    display: grid;
    grid-template-columns: 1fr auto 1fr;
    align-items: end;
}

.comments {
    padding-left: 36px;
    border-top: none;
}

.navbar {
    display: flex;
    align-items: center;
    gap: 15px;
    width: 380px;
    height: 36px;
    margin-bottom: 1px;
    padding-left: 5px;
    background: #f0f0f0;
}

.navbar button {
    gap: 3px;
}

.navbar .spaced {
    gap: 8px;
    margin-right: -5px;
}

.navbar svg {
    width: 24px;
    height: 24px;
}

.navbar .caret {
    border-width: 6px 4px 0;
}

.display {
    display: flex;
    gap: 11px;
    margin-left: 11px;
}

/* timeline */
.timeline {
    display: flex;
    align-items: center;
    height: 74px;
    padding: 0 20px 0 7px;
    background: #f0f0f0;
    border-top: 3px solid #ccc;
}

.playback {
    display: flex;
}

.playback button {
    width: 37px;
    height: 36px;
}

.playback svg {
    width: 20px;
    height: 24px;
    fill: #4d4d4d;
}

.feature {
    margin: 0 auto 0 24px;
}

.feature svg {
    width: 44px;
    height: 50px;
}

.settings svg {
    width: 24px;
    height: 24px;
}
```
